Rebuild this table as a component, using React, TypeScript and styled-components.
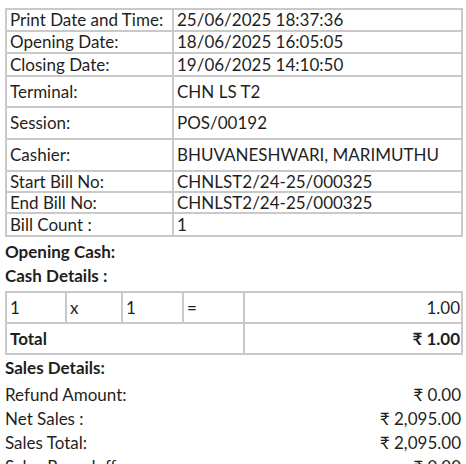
import React from 'react';
import styled, {createGlobalStyle} from "styled-components";

const GlobalStyle = createGlobalStyle`
  body {
    margin: 0;
    background: #fff;
    font-family: Lato, "Open Sans", sans-serif;
    color: #1f1f1f;
  }
`

const infoRows = [
    {label: 'Print Date and Time:', value: '25/06/2025 18:37:36', h: 22},
    {label: 'Opening Date:', value: '18/06/2025 16:05:05', h: 22},
    {label: 'Closing Date:', value: '19/06/2025 14:10:50', h: 23},
    {label: 'Terminal:', value: 'CHN LS T2', h: 31},
    {label: 'Session:', value: 'POS/00192', h: 32},
    {label: 'Cashier:', value: 'BHUVANESHWARI, MARIMUTHU', h: 32},
    {label: 'Start Bill No:', value: 'CHNLST2/24-25/000325', h: 21},
    {label: 'End Bill No:', value: 'CHNLST2/24-25/000325', h: 21},
    {label: 'Bill Count :', value: '1', h: 23},
]

const salesRows = [
    {label: 'Refund Amount:', value: '₹ 0.00'},
    {label: 'Net Sales :', value: '₹ 2,095.00'},
    {label: 'Sales Total:', value: '₹ 2,095.00'},
    {label: 'Sales Roundoff:', value: '₹ 0.00'},
]

export default function App() {
    return (
        <Page>
            <GlobalStyle/>
            <InfoTable>
                <tbody>
                {infoRows.map((r) => (
                    <InfoRow key={r.label} $h={r.h}>
                        <LabelCell>{r.label}</LabelCell>
                        <Cell>{r.value}</Cell>
                    </InfoRow>
                ))}
                </tbody>
            </InfoTable>

            <Heading>Opening Cash:</Heading>
            <Heading>Cash Details :</Heading>

            <CashTable>
                <colgroup>
                    <col style={{width: 60}}/>
                    <col style={{width: 56}}/>
                    <col style={{width: 61}}/>
                    <col style={{width: 61}}/>
                    <col/>
                </colgroup>
                <tbody>
                <CashRow>
                    <Cell>1</Cell>
                    <Cell>x</Cell>
                    <Cell>1</Cell>
                    <Cell>=</Cell>
                    <Cell $right>1.00</Cell>
                </CashRow>
                <CashRow>
                    <Cell colSpan={4} $bold>Total</Cell>
                    <Cell $right $bold>₹ 1.00</Cell>
                </CashRow>
                </tbody>
            </CashTable>

            <SalesHeading>Sales Details:</SalesHeading>
            {salesRows.map((s) => (
                <SalesLine key={s.label}>
                    <span>{s.label}</span>
                    <span>{s.value}</span>
                </SalesLine>
            ))}
        </Page>
    );
}

const Page = styled.div`
  padding: 8px 3px 0 5px;
  font-size: 17px;
  height: 464px;
  overflow: hidden;
  box-sizing: border-box;
`

const InfoTable = styled.table`
  width: 100%;
  border-collapse: collapse;
  table-layout: fixed;
`

const InfoRow = styled.tr<{ $h: number }>`
  height: ${p => p.$h}px;
`

const Cell = styled.td<{ $right?: boolean, $bold?: boolean }>`
  border: 2px solid #c9c9c9;
  padding: 0 1px 0 3px;
  line-height: 18px;
  vertical-align: middle;
  text-align: ${p => p.$right ? 'right' : 'left'};
  font-weight: ${p => p.$bold ? 700 : 400};
  white-space: nowrap;
`

const LabelCell = styled(Cell)`
  width: 161px;
`

const Heading = styled.div`
  font-weight: 700;
  line-height: 24px;
  &:first-of-type {
    margin-top: 3px;
  }
`

const CashTable = styled.table`
  width: 100%;
  border-collapse: collapse;
  table-layout: fixed;
  margin-top: 3px;
`

const CashRow = styled.tr`
  height: 31px;
`

const SalesHeading = styled.div`
  font-weight: 700;
  line-height: 24px;
  margin: 1px 0 3px;
`

const SalesLine = styled.div`
  display: flex;
  justify-content: space-between;
  line-height: 24px;
  padding-right: 2px;
`
